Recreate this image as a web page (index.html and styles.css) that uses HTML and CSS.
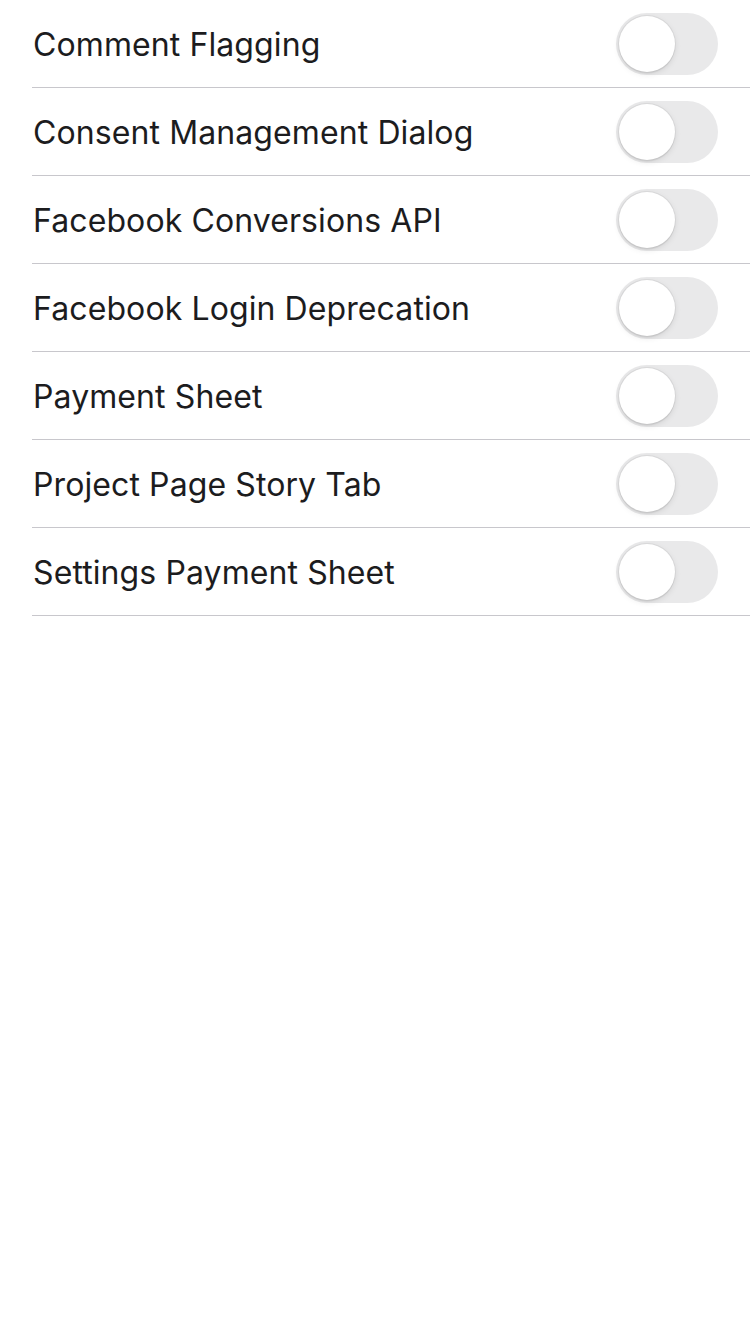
FILE: index.html
```html
<!DOCTYPE html>
<html>
<head>
<meta charset="utf-8">
<link rel="stylesheet" href="styles.css">
</head>
<body>
<ul class="list">
  <li class="row"><span class="label">Comment Flagging</span><span class="switch"><span class="knob"></span></span></li>
  <li class="row"><span class="label">Consent Management Dialog</span><span class="switch"><span class="knob"></span></span></li>
  <li class="row"><span class="label">Facebook Conversions API</span><span class="switch"><span class="knob"></span></span></li>
  <li class="row"><span class="label">Facebook Login Deprecation</span><span class="switch"><span class="knob"></span></span></li>
  <li class="row"><span class="label">Payment Sheet</span><span class="switch"><span class="knob"></span></span></li>
  <li class="row"><span class="label">Project Page Story Tab</span><span class="switch"><span class="knob"></span></span></li>
  <li class="row"><span class="label">Settings Payment Sheet</span><span class="switch"><span class="knob"></span></span></li>
</ul>
</body>
</html>
```
FILE: styles.css
```css
html, body {
  margin: 0;
  padding: 0;
  background: #ffffff;
}
body {
  font-family: Inter, "Noto Sans", "Liberation Sans", sans-serif;
  color: #1c1c1e;
}
.list {
  list-style: none;
  margin: 0 0 0 32px;
  padding: 0;
}
.row {
  height: 87px;
  border-bottom: 1px solid #c8c7cc;
  display: flex;
  align-items: center;
  justify-content: space-between;
  padding-right: 32px;
}
.label {
  font-size: 32px;
  letter-spacing: 0.1px;
  padding-left: 1px;
  padding-top: 2px;
}
.switch {
  width: 102px;
  height: 62px;
  box-sizing: border-box;
  border-radius: 31px;
  background: #e9e9ea;
  padding: 3px;
  display: flex;
  align-items: center;
}
.knob {
  width: 56px;
  height: 56px;
  border-radius: 50%;
  background: #ffffff;
  box-shadow: 0 2px 6px rgba(0,0,0,0.10), 0 0 0 1px rgba(0,0,0,0.05), 0 2px 1px rgba(0,0,0,0.04);
}
```
